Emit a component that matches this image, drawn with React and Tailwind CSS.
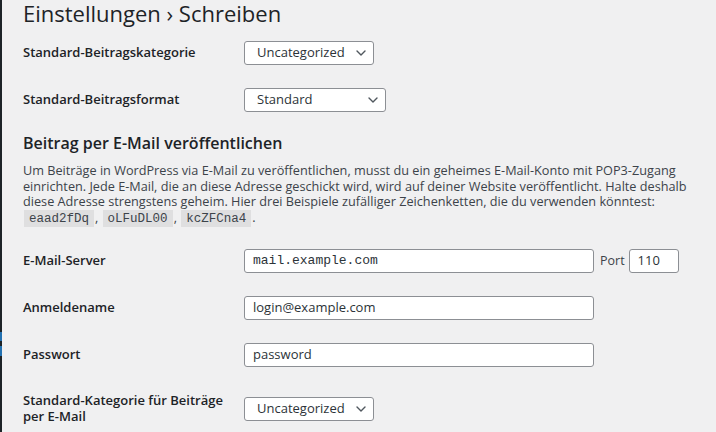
import React from 'react';

const Chevron = () => (
  <svg width="10" height="6" viewBox="0 0 10 6" className="shrink-0">
    <path d="M1 1l4 4 4-4" fill="none" stroke="#50575e" strokeWidth="1.4" strokeLinecap="round" strokeLinejoin="round" />
  </svg>
);

const Select = ({ value, width }) => (
  <div className={`${width} h-[24px] bg-white border border-[#8c8f94] rounded-[3px] flex items-center justify-between pl-[12px] pr-[7px] text-[13px] text-[#2c3338]`}>
    <span>{value}</span>
    <Chevron />
  </div>
);

const Input = ({ value, mono }) => (
  <div className={`w-[350px] h-[24px] bg-white border border-[#8c8f94] rounded-[3px] flex items-center pl-[8px] text-[13px] text-[#2c3338] ${mono ? 'font-["Liberation_Mono",monospace]' : ''}`}>
    {value}
  </div>
);

const Code = ({ children }) => (
  <code className='bg-black/[0.07] px-[5px] pt-[2px] pb-[1px] mx-[1px] font-["Liberation_Mono",monospace] text-[12.5px] text-[#3c434a]'>{children}</code>
);

const Row = ({ label, children, className = '' }) => (
  <div className={`flex items-center h-[24px] ${className}`}>
    <div className="w-[221px] text-[13px] font-semibold text-[#1d2327]">{label}</div>
    {children}
  </div>
);

export default function App() {
  return (
    <div className='w-[716px] h-[432px] bg-[#f0f0f1] flex overflow-hidden font-["Open_Sans",sans-serif]'>
      {/* sidebar edge */}
      <div className="w-[2px] bg-[#1d2327] flex flex-col">
        <div className="h-[332px]" />
        <div className="h-[9px] bg-[#2271b1]" />
        <div className="h-[5px]" />
        <div className="h-[10px] bg-[#2271b1]" />
      </div>

      <div className="flex-1 pl-[21px]">
        <h1 className="text-[22px] leading-[26px] text-[#1d2327] font-normal">Einstellungen › Schreiben</h1>

        <Row label="Standard-Beitragskategorie" className="mt-[15px]">
          <Select value="Uncategorized" width="w-[130px]" />
        </Row>
        <Row label="Standard-Beitragsformat" className="mt-[23px]">
          <Select value="Standard" width="w-[142px]" />
        </Row>

        <h2 className="mt-[21px] text-[16px] leading-[20px] font-semibold text-[#1d2327]">Beitrag per E-Mail veröffentlichen</h2>
        <p className="mt-[10px] w-[675px] text-[12.7px] leading-[15.5px] text-[#3c434a]">
          Um Beiträge in WordPress via E-Mail zu veröffentlichen, musst du ein geheimes E-Mail-Konto mit POP3-Zugang einrichten. Jede E-Mail, die an diese Adresse geschickt wird, wird auf deiner Website veröffentlicht. Halte deshalb diese Adresse strengstens geheim. Hier drei Beispiele zufälliger Zeichenketten, die du verwenden könntest:{' '}
          <Code>eaad2fDq</Code>, <Code>oLFuDL00</Code>, <Code>kcZFCna4</Code>.
        </p>

        <Row label="E-Mail-Server" className="mt-[22px]">
          <Input value="mail.example.com" mono />
          <span className="ml-[6px] text-[12.5px] text-[#3c434a]">Port</span>
          <div className="ml-[4px] w-[50px] h-[24px] bg-white border border-[#8c8f94] rounded-[3px] flex items-center pl-[8px] text-[13px] text-[#2c3338]">110</div>
        </Row>
        <Row label="Anmeldename" className="mt-[23px]">
          <Input value="login@example.com" />
        </Row>
        <Row label="Passwort" className="mt-[23px]">
          <Input value="password" />
        </Row>

        <div className="flex items-start mt-[25px]">
          <div className="w-[221px] text-[13px] leading-[16px] font-semibold text-[#1d2327]">
            Standard-Kategorie für Beiträge<br />per E-Mail
          </div>
          <div className="mt-[5px]">
            <Select value="Uncategorized" width="w-[130px]" />
          </div>
        </div>
      </div>
    </div>
  );
}
